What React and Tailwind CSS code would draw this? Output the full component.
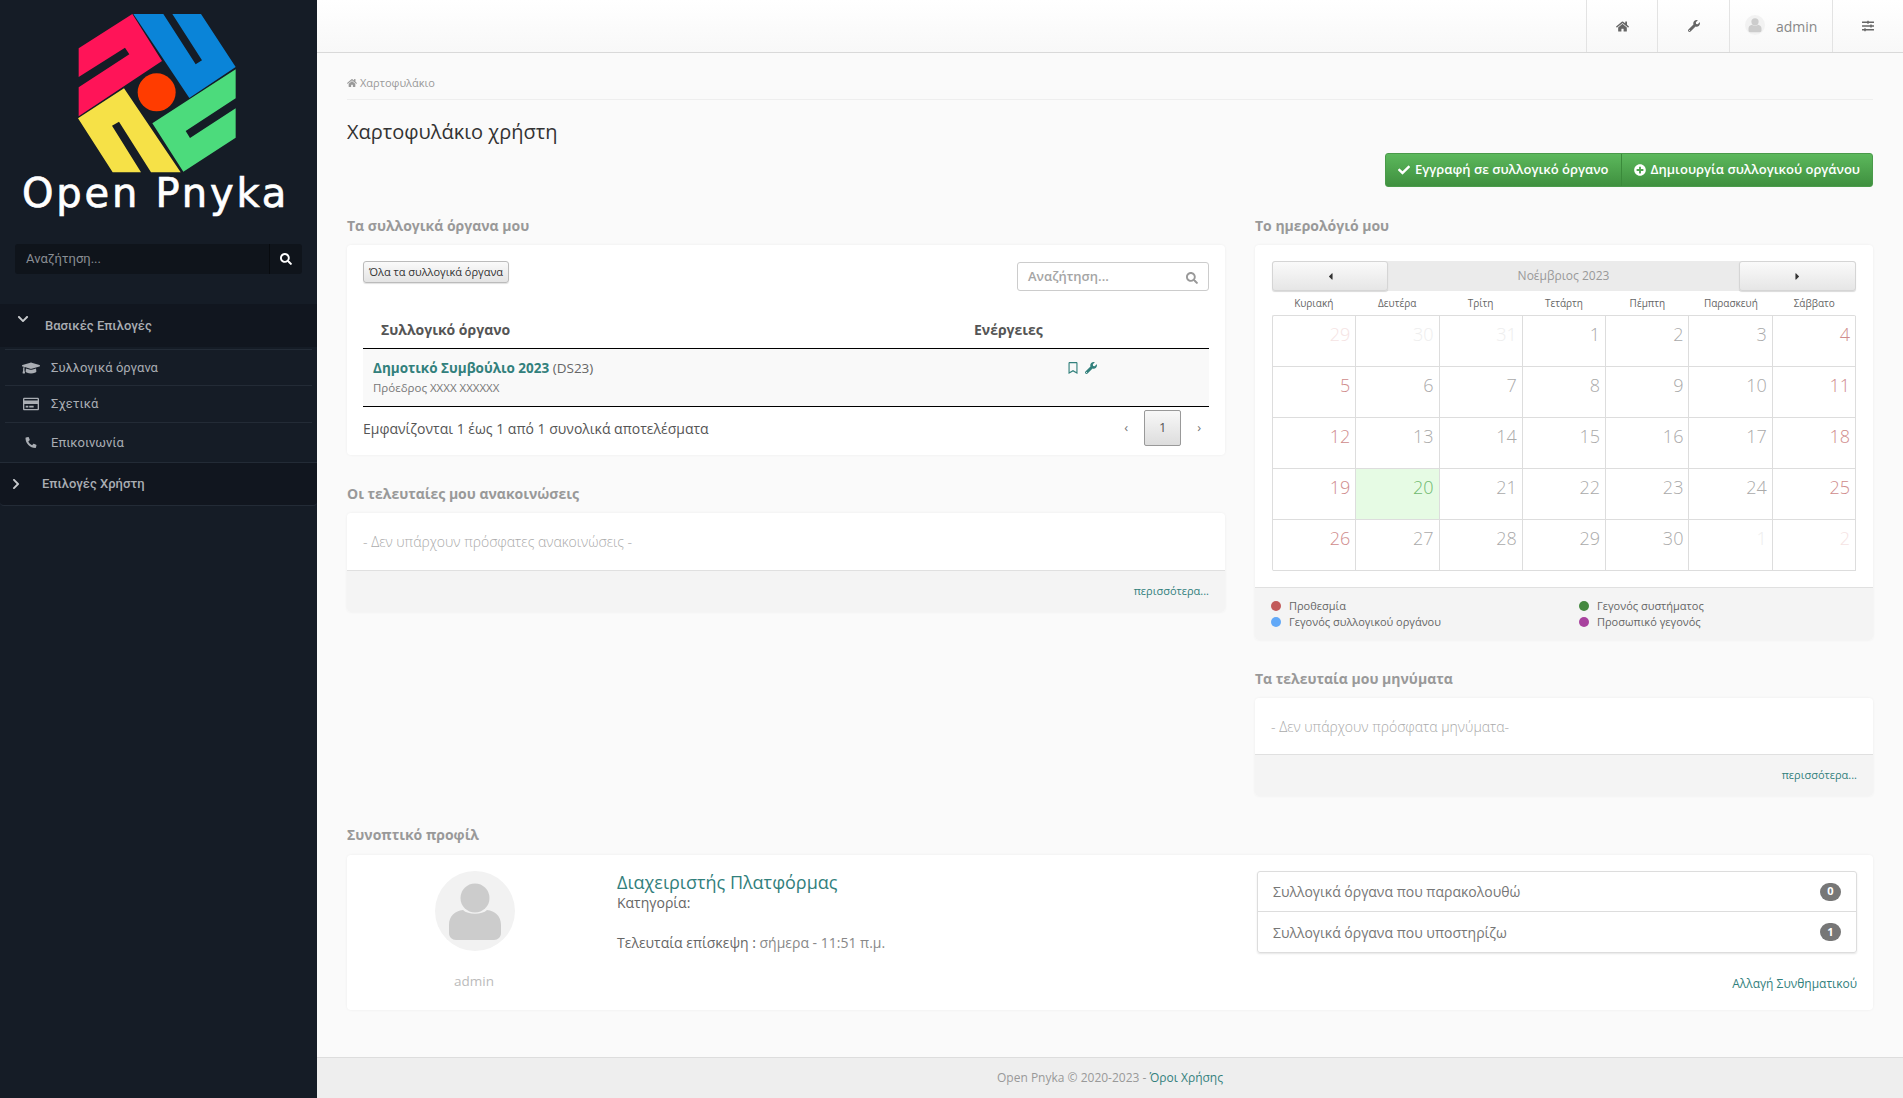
import {
  FaHome, FaWrench, FaCheck, FaPlusCircle, FaSearch, FaChevronDown, FaChevronRight,
  FaGraduationCap, FaRegCreditCard, FaPhone, FaSlidersH, FaRegBookmark, FaCaretLeft, FaCaretRight,
} from 'react-icons/fa'

const days = [
  [29, 'oldred'], [30, 'old'], [31, 'old'], [1], [2], [3], [4, 'red'],
  [5, 'red'], [6], [7], [8], [9], [10], [11, 'red'],
  [12, 'red'], [13], [14], [15], [16], [17], [18, 'red'],
  [19, 'red'], [20, 'today'], [21], [22], [23], [24], [25, 'red'],
  [26, 'red'], [27], [28], [29], [30], [1, 'old'], [2, 'oldred'],
]

const dayColor = {
  red: 'text-[#cf8c8c]',
  old: 'text-[#eeeeee]',
  oldred: 'text-[#f5e3e3]',
  today: 'text-[#6fb96f] bg-[#e6fbe4]',
}

const weekdays = ['Κυριακή', 'Δευτέρα', 'Τρίτη', 'Τετάρτη', 'Πέμπτη', 'Παρασκευή', 'Σάββατο']

function Logo() {
  return (
    <svg viewBox="0 0 540 540" className="ml-[70px] h-[180px] w-[180px]">
      <polygon fill="#ff1458" points="26,130 187,27 276,168 26,334 26,247 178,148 165,128 26,216" />
      <polygon fill="#0a84d8" points="190,27 280,27 377,178 396,166 307,27 393,27 497,186 358,279" />
      <polygon fill="#4cdb7c" points="497,193 497,280 347,378 360,399 497,310 497,398 340,500 247,355" />
      <polygon fill="#f6e147" points="24,340 162,250 332,502 243,502 147,350 126,362 213,502 128,502" />
      <circle cx="260" cy="262" r="57" fill="#ff3c00" />
    </svg>
  )
}

function UserShape({ className }) {
  return (
    <svg viewBox="0 0 80 80" className={className}>
      <circle cx="40" cy="40" r="40" fill="#f2f2f2" />
      <circle cx="40" cy="27" r="14.5" fill="#cccccc" />
      <path d="M28 39 C33 44 47 44 52 39 C60 40 66 45 66 54 L66 62 C66 66 63 69 59 69 L21 69 C17 69 14 66 14 62 L14 54 C14 45 20 40 28 39 Z" fill="#cccccc" />
    </svg>
  )
}

function Sidebar() {
  return (
    <aside className="w-[317px] shrink-0 bg-[#151c26] font-['Roboto',sans-serif] text-[13px] text-[#a9adb3]">
      <div className="h-[175px] pt-[5px]">
        <Logo />
      </div>
      <div className="mt-[-5px] pl-[22px] font-['DejaVu_Sans',sans-serif] text-[40px] leading-[46px] tracking-[2.8px] text-white [-webkit-text-stroke:0.7px_white]">
        Open Pnyka
      </div>
      <div className="mx-[15px] mt-[28px] flex h-[30px] items-center rounded-[3px] bg-[#0f141b]">
        <span className="flex-1 pl-[11px] text-[#8a8e94]">Αναζήτηση...</span>
        <span className="flex h-full w-[33px] items-center justify-center border-l border-[#080b0f] text-[12px] text-white">
          <FaSearch />
        </span>
      </div>
      <div className="mt-[30px] flex h-[43px] items-center bg-[#11161f] pl-[17px] font-medium">
        <FaChevronDown className="mb-[14px] w-[12px] text-[12px] text-[#c8cacd]" />
        <span className="ml-[16px]">Βασικές Επιλογές</span>
      </div>
      <ul className="ml-[5px] mr-[5px] mt-[2px]">
        <li className="flex h-[37px] items-center border-y border-[#232b36] pl-[17px]">
          <FaGraduationCap className="w-[18px] text-[16px]" />
          <span className="ml-[11px]">Συλλογικά όργανα</span>
        </li>
        <li className="flex h-[37px] items-center border-b border-[#232b36] pl-[18px]">
          <FaRegCreditCard className="w-[16px] text-[16px]" />
          <span className="ml-[12px]">Σχετικά</span>
        </li>
        <li className="flex h-[39px] items-center pl-[20px]">
          <FaPhone className="w-[12px] -scale-x-100 text-[11px]" />
          <span className="ml-[14px]">Επικοινωνία</span>
        </li>
      </ul>
      <div className="flex h-[44px] items-center rounded-b-[4px] border-y border-[#232b36] bg-[#11161f] pl-[11px] font-medium">
        <FaChevronRight className="w-[10px] text-[12px] text-[#c8cacd]" />
        <span className="ml-[21px]">Επιλογές Χρήστη</span>
      </div>
    </aside>
  )
}

function Topbar() {
  return (
    <header className="flex h-[53px] shrink-0 justify-end border-b border-[#d9d9d9] bg-gradient-to-b from-white to-[#f8f8f8] pr-0 text-[#666666]">
      <div className="flex w-[71px] items-center justify-center border-l border-[#e3e3e3] text-[13px]">
        <FaHome />
      </div>
      <div className="flex w-[72px] items-center justify-center border-l border-[#e3e3e3] text-[12px]">
        <FaWrench />
      </div>
      <div className="flex w-[103px] items-center border-l border-[#e3e3e3] pl-[15px]">
        <UserShape className="mb-[2px] h-[20px] w-[20px]" />
        <span className="ml-[11px] text-[14px] text-[#888888]">admin</span>
      </div>
      <div className="flex w-[71px] items-center justify-center border-l border-[#e3e3e3] text-[12px]">
        <FaSlidersH />
      </div>
    </header>
  )
}

function Heading({ children }) {
  return <h2 className="mb-[9px] h-5 text-[14px] font-bold leading-5 text-[#999999]">{children}</h2>
}

function Card({ className = '', children }) {
  return <div className={`rounded-[4px] bg-white shadow-[0_0_3px_rgba(0,0,0,0.06)] ${className}`}>{children}</div>
}

function MoreFooter() {
  return (
    <div className="flex h-[42px] items-center justify-end rounded-b-[4px] border-t border-[#e0e0e0] bg-[#f4f4f4] pr-4 text-[11px] text-[#32807c]">
      περισσότερα...
    </div>
  )
}

function CommitteesCard() {
  return (
    <Card className="h-[210px] px-4 pt-4 text-[#555555]">
      <div className="flex items-start justify-between">
        <button className="mt-0 h-[22px] rounded-[3px] border border-[#bbbbbb] bg-gradient-to-b from-[#fafafa] to-[#e4e4e4] px-[5px] text-[11px] leading-[20px] text-[#333333] shadow-[0_1px_1px_rgba(0,0,0,0.12)]">
          Όλα τα συλλογικά όργανα
        </button>
        <div className="mt-px flex h-[29px] w-[192px] items-center justify-between rounded-[3px] border border-[#cccccc] px-[10px] text-[13px] font-semibold text-[#a5a5a5]">
          <span>Αναζήτηση...</span>
          <FaSearch className="mt-[2px] text-[12px] text-[#999999]" />
        </div>
      </div>
      <div className="mt-[20px] flex h-[38px] items-center border-b-[1.5px] border-black text-[14px] font-bold text-[#555555]">
        <span className="ml-[18px] w-[593px]">Συλλογικό όργανο</span>
        <span>Ενέργειες</span>
      </div>
      <div className="relative h-[58px] border-b-[1.5px] border-black bg-[#f9f9f9] pl-[10px] pt-[9px]">
        <div className="text-[13.5px] leading-[20px]">
          <b className="text-[#32807c]">Δημοτικό Συμβούλιο 2023</b> <span className="text-[#666666]">(DS23)</span>
        </div>
        <div className="mt-[1px] text-[11.5px] leading-[18px] text-[#777777]">Πρόεδρος XXXX XXXXXX</div>
        <div className="absolute left-[704px] top-[13px] flex items-center gap-[6px] text-[12px] text-[#32807c]">
          <FaRegBookmark />
          <FaWrench />
        </div>
      </div>
      <div className="mt-[3px] flex items-center">
        <span className="w-[768px] text-[14px] text-[#555555]">Εμφανίζονται 1 έως 1 από 1 συνολικά αποτελέσματα</span>
        <span className="w-[20px] text-center text-[13px] text-[#777777]">‹</span>
        <span className="ml-[8px] flex h-[36px] w-[38px] items-center justify-center rounded-[2px] border border-[#999999] bg-gradient-to-b from-[#f8f8f8] to-[#dddddd] text-[13px] text-[#555555]">
          1
        </span>
        <span className="ml-[8px] w-[20px] text-center text-[13px] text-[#777777]">›</span>
      </div>
    </Card>
  )
}

function Calendar() {
  return (
    <Card className="h-[395px]">
      <div className="mx-[17px] pt-4">
        <div className="flex h-[30px] items-stretch rounded-[3px] bg-[#ebebeb] text-[12px] text-[#999999]">
          <div className="flex w-[116px] items-center justify-center rounded-[3px] border border-[#d5d5d5] bg-gradient-to-b from-[#fafafa] to-[#e6e6e6] text-[11px] text-[#333333] shadow-[0_1px_1px_rgba(0,0,0,0.15)]">
            <FaCaretLeft />
          </div>
          <div className="flex flex-1 items-center justify-center">Νοέμβριος 2023</div>
          <div className="flex w-[117px] items-center justify-center rounded-[3px] border border-[#d5d5d5] bg-gradient-to-b from-[#fafafa] to-[#e6e6e6] text-[11px] text-[#333333] shadow-[0_1px_1px_rgba(0,0,0,0.15)]">
            <FaCaretRight />
          </div>
        </div>
        <div className="grid h-[24px] grid-cols-7 items-center text-center text-[10px] text-[#666666]">
          {weekdays.map((d) => (
            <span key={d}>{d}</span>
          ))}
        </div>
        <div className="grid grid-cols-7 rounded-[2px] border-l border-t border-[#dddddd]">
          {days.map(([n, kind], i) => (
            <div
              key={i}
              className={`h-[51px] border-b border-r border-[#dddddd] pr-[5px] pt-[6px] text-right text-[18px] font-light leading-[24px] ${dayColor[kind] || 'text-[#aaaaaa]'}`}
            >
              {n}
            </div>
          ))}
        </div>
      </div>
      <div className="mt-[16px] grid h-[53px] grid-cols-[308px_1fr] content-center gap-y-[2px] rounded-b-[4px] border-t border-[#e0e0e0] bg-[#f4f4f4] pl-[16px] text-[11px] leading-[14px] text-[#666666]">
        <Legend color="bg-[#c25b5b]" label="Προθεσμία" />
        <Legend color="bg-[#44883f]" label="Γεγονός συστήματος" />
        <Legend color="bg-[#62a9f8]" label="Γεγονός συλλογικού οργάνου" />
        <Legend color="bg-[#a8429e]" label="Προσωπικό γεγονός" />
      </div>
    </Card>
  )
}

function Legend({ color, label }) {
  return (
    <div className="flex items-center">
      <span className={`mr-[8px] h-[10px] w-[10px] rounded-full ${color}`} />
      {label}
    </div>
  )
}

function Profile() {
  return (
    <Card className="flex h-[155px] px-4 pt-4">
      <div className="w-[222px] shrink-0 text-center">
        <UserShape className="mx-auto ml-[72px] h-[80px] w-[80px]" />
        <div className="mt-[21px] text-[13.5px] leading-[18px] text-[#bbbbbb]">admin</div>
      </div>
      <div className="ml-[32px] w-[640px] text-[14px] text-[#666666]">
        <div className="text-[18px] leading-[22px] text-[#32807c]">Διαχειριστής Πλατφόρμας</div>
        <div className="leading-[20px]">Κατηγορία:</div>
        <div className="mt-[20px] leading-[20px]">
          Τελευταία επίσκεψη : <span className="text-[#888888]">σήμερα - 11:51 π.μ.</span>
        </div>
      </div>
      <div className="flex-1">
        <div className="rounded-[3px] border border-[#dddddd] text-[14px] text-[#777777] shadow-[0_1px_2px_rgba(0,0,0,0.1)]">
          <div className="flex h-[40px] items-center justify-between border-b border-[#dddddd] pl-[15px] pr-[15px]">
            Συλλογικά όργανα που παρακολουθώ
            <span className="flex h-[18px] w-[21px] items-center justify-center rounded-full bg-[#777777] text-[11px] font-bold text-white">0</span>
          </div>
          <div className="flex h-[40px] items-center justify-between pl-[15px] pr-[15px]">
            Συλλογικά όργανα που υποστηρίζω
            <span className="flex h-[18px] w-[21px] items-center justify-center rounded-full bg-[#777777] text-[11px] font-bold text-white">1</span>
          </div>
        </div>
        <div className="mt-[23px] text-right text-[12px] leading-[16px] text-[#32807c]">Αλλαγή Συνθηματικού</div>
      </div>
    </Card>
  )
}

export default function App() {
  return (
    <div className="flex h-[1098px] overflow-hidden bg-[#fafafa] font-['Open_Sans',sans-serif]">
      <Sidebar />
      <div className="flex min-w-0 flex-1 flex-col rounded-tl-[6px] bg-[#fafafa]">
        <Topbar />
        <main className="flex-1 px-[30px]">
          <div className="mt-[20px] flex h-[27px] items-start gap-[3px] border-b border-[#eeeeee] pt-[3px] text-[11px] leading-[14px] text-[#999999]">
            <FaHome className="mt-[2px] text-[10px]" />
            Χαρτοφυλάκιο
          </div>
          <h1 className="mt-[18px] text-[20px] leading-[28px] text-[#333333]">Χαρτοφυλάκιο χρήστη</h1>
          <div className="mt-[7px] flex justify-end">
            <div className="flex h-[34px] rounded-[3px] border border-[#4a9a4a] bg-gradient-to-b from-[#5cb85c] to-[#3f903f] text-[13px] font-semibold text-white">
              <span className="flex items-center gap-[5px] px-[12px]">
                <FaCheck className="text-[12px]" />
                Εγγραφή σε συλλογικό όργανο
              </span>
              <span className="flex items-center gap-[5px] border-l border-[#3a8a3a] px-[12px]">
                <FaPlusCircle className="text-[12px]" />
                Δημιουργία συλλογικού οργάνου
              </span>
            </div>
          </div>
          <div className="mt-[29px] grid grid-cols-[878px_618px] gap-x-[30px]">
            <div>
              <Heading>Τα συλλογικά όργανα μου</Heading>
              <CommitteesCard />
              <div className="mt-[29px]">
                <Heading>Οι τελευταίες μου ανακοινώσεις</Heading>
              </div>
              <Card>
                <div className="flex h-[57px] items-center px-4 text-[14px] font-light text-[#aaaaaa]">
                  - Δεν υπάρχουν πρόσφατες ανακοινώσεις -
                </div>
                <MoreFooter />
              </Card>
            </div>
            <div>
              <Heading>Το ημερολόγιό μου</Heading>
              <Calendar />
              <div className="mt-[29px]">
                <Heading>Τα τελευταία μου μηνύματα</Heading>
              </div>
              <Card>
                <div className="flex h-[56px] items-center px-4 text-[14px] font-light text-[#aaaaaa]">
                  - Δεν υπάρχουν πρόσφατα μηνύματα-
                </div>
                <MoreFooter />
              </Card>
            </div>
          </div>
          <div className="mt-[29px]">
            <h2 className="mb-[10px] h-5 text-[14px] font-bold leading-5 text-[#999999]">Συνοπτικό προφίλ</h2>
            <Profile />
          </div>
        </main>
        <footer className="flex h-[41px] shrink-0 items-center justify-center border-t border-[#dddddd] bg-[#eeeeee] text-[12px] text-[#999999]">
          Open Pnyka © 2020-2023 -&nbsp;<span className="text-[#32807c]">Όροι Χρήσης</span>
        </footer>
      </div>
    </div>
  )
}
